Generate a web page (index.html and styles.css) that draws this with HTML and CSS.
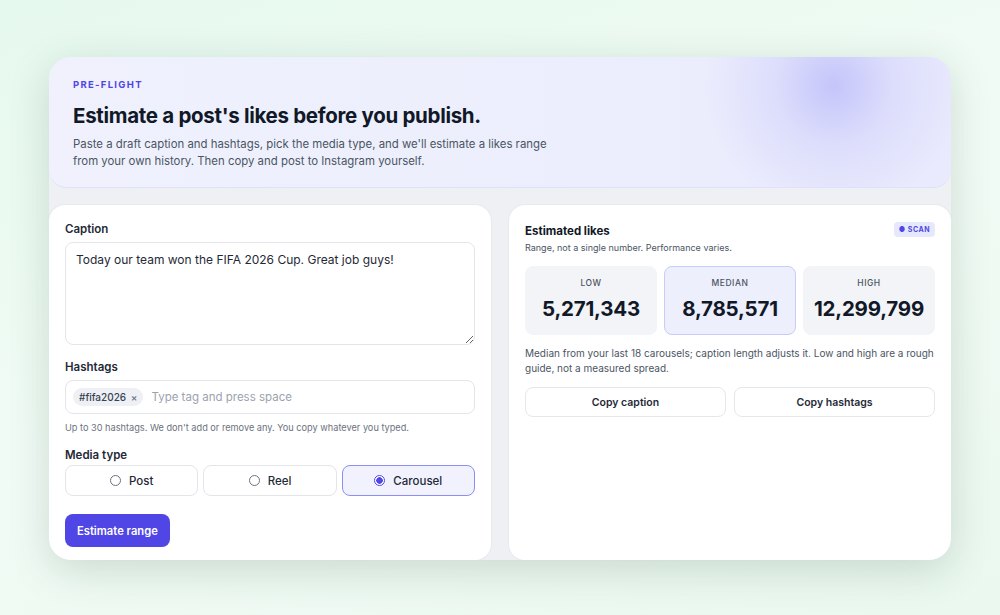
FILE: index.html
```html
<!DOCTYPE html>
<html lang="en">
<head>
    <meta charset="UTF-8">
    <meta name="viewport" content="width=device-width, initial-scale=1.0">
    <title>Pre-flight</title>
    <link rel="stylesheet" href="styles.css">
</head>
<body>

<div class="window">

    <!-- Intro header -->
    <header class="hero">
        <div class="eyebrow">PRE-FLIGHT</div>
        <h1>Estimate a post's likes before you publish.</h1>
        <p>Paste a draft caption and hashtags, pick the media type, and we'll estimate a likes range from your own history. Then copy and post to Instagram yourself.</p>
    </header>

    <div class="panels">

        <!-- Draft form -->
        <div class="panel draft" id="draft">
            <label class="field-label" for="caption">Caption</label>
            <textarea id="caption" class="caption">Today our team won the FIFA 2026 Cup. Great job guys!</textarea>

            <label class="field-label mt" for="tagInput">Hashtags</label>
            <div class="tag-box">
                <span class="chip">#fifa2026 <span class="chip-x">×</span></span>
                <input type="text" id="tagInput" placeholder="Type tag and press space">
            </div>
            <div class="help">Up to 30 hashtags. We don't add or remove any. You copy whatever you typed.</div>

            <div class="field-label mt2">Media type</div>
            <div class="media">
                <button type="button" class="media-opt"><span class="radio"></span>Post</button>
                <button type="button" class="media-opt"><span class="radio"></span>Reel</button>
                <button type="button" class="media-opt active"><span class="radio"></span>Carousel</button>
            </div>

            <button type="button" class="primary">Estimate range</button>
        </div>

        <!-- Result -->
        <div class="panel" id="result">
            <div class="result-head">
                <div>
                    <h2>Estimated likes</h2>
                    <div class="sub">Range, not a single number. Performance varies.</div>
                </div>
                <span class="badge">● SCAN</span>
            </div>

            <div class="stats">
                <div class="stat">
                    <div class="stat-label">LOW</div>
                    <div class="stat-value">5,271,343</div>
                </div>
                <div class="stat median">
                    <div class="stat-label">MEDIAN</div>
                    <div class="stat-value">8,785,571</div>
                </div>
                <div class="stat">
                    <div class="stat-label">HIGH</div>
                    <div class="stat-value">12,299,799</div>
                </div>
            </div>

            <p class="note">Median from your last 18 carousels; caption length adjusts it. Low and high are a rough guide, not a measured spread.</p>

            <div class="copy-row">
                <button type="button" class="ghost">Copy caption</button>
                <button type="button" class="ghost">Copy hashtags</button>
            </div>
        </div>

    </div>
</div>

</body>
</html>
```

FILE: styles.css
```css
body {
    font-family: 'Inter', 'Liberation Sans', sans-serif;
    margin: 0;
    padding: 57px 49px 0;
    height: 615px;
    box-sizing: border-box;
    overflow: hidden;
    background: linear-gradient(160deg, #e6f9ee 0%, #f1fbf5 50%, #eaf8ef 100%);
    color: #111827;
}

.window {
    height: 503px;
    border-radius: 22px;
    overflow: hidden;
    background-color: #eef0f4;
    box-shadow: 0 10px 40px rgba(40, 70, 55, 0.18);
    display: flex;
    flex-direction: column;
}

.hero {
    flex-shrink: 0;
    height: 131px;
    box-sizing: border-box;
    padding: 22px 24px 0;
    border-bottom: 1px solid #dfe1fb;
    border-radius: 0 0 18px 18px;
    background:
        radial-gradient(circle at 87% 22%, rgba(190, 190, 250, 0.85) 0, rgba(205, 205, 250, 0.45) 60px, rgba(230, 230, 252, 0) 130px),
        linear-gradient(90deg, #f0f1fd 0%, #eceefd 60%, #e9eafd 100%);
}

.eyebrow {
    font-size: 9.5px;
    font-weight: 700;
    letter-spacing: 1.3px;
    color: #4f46e5;
}

.hero h1 {
    margin: 13px 0 0;
    font-size: 20.5px;
    font-weight: 700;
    letter-spacing: -0.3px;
    color: #111827;
}

.hero p {
    margin: 8px 0 0;
    width: 490px;
    font-size: 11.4px;
    line-height: 17px;
    color: #4b5563;
}

.panels {
    flex: 1;
    min-height: 0;
    margin-top: 17px;
    display: grid;
    grid-template-columns: 1fr 1fr;
    gap: 18px;
}

.panel {
    background-color: #fff;
    border-radius: 16px;
    padding: 18px 16px 0;
    box-shadow: 0 0 0 1px #e7e9ef;
}

.panel.draft {
    padding-top: 17px;
}

.field-label {
    display: block;
    font-size: 11.5px;
    font-weight: 600;
    color: #1f2937;
    margin-bottom: 6px;
}

.mt {
    margin-top: 15px;
}

.mt2 {
    margin-top: 15px;
    margin-bottom: 3px;
}

.caption {
    display: block;
    width: 100%;
    height: 103px;
    box-sizing: border-box;
    border: 1px solid #e3e5ea;
    border-radius: 8px;
    padding: 9px 10px;
    font-family: 'Inter', 'Liberation Sans', sans-serif;
    font-size: 12px;
    color: #1f2937;
    resize: vertical;
}

.tag-box {
    display: flex;
    align-items: center;
    gap: 6px;
    height: 34px;
    box-sizing: border-box;
    border: 1px solid #e3e5ea;
    border-radius: 8px;
    padding: 0 7px;
}

.chip {
    background-color: #eef0f6;
    border-radius: 10px;
    padding: 3px 6px 3px 6px;
    font-size: 10px;
    font-weight: 500;
    color: #374151;
    white-space: nowrap;
}

.chip-x {
    margin-left: 2px;
    color: #6b7280;
}

.tag-box input {
    flex: 1;
    border: none;
    outline: none;
    font-family: 'Inter', 'Liberation Sans', sans-serif;
    font-size: 11.5px;
    color: #111827;
}

.tag-box input::placeholder {
    color: #9ca3af;
}

.help {
    margin-top: 8px;
    font-size: 9.2px;
    color: #6b7280;
}

.media {
    display: grid;
    grid-template-columns: 1fr 1fr 1fr;
    gap: 5px;
}

.media-opt {
    height: 31px;
    display: flex;
    align-items: center;
    justify-content: center;
    gap: 8px;
    background-color: #fff;
    border: 1px solid #e3e5ea;
    border-radius: 8px;
    font-family: 'Inter', 'Liberation Sans', sans-serif;
    font-size: 11.5px;
    font-weight: 500;
    color: #1f2937;
    cursor: pointer;
}

.radio {
    width: 9px;
    height: 9px;
    border: 1px solid #6b7280;
    border-radius: 50%;
    box-sizing: content-box;
}

.media-opt.active {
    background-color: #f1f2fe;
    border-color: #8b8ff3;
}

.media-opt.active .radio {
    border-color: #4f46e5;
    background: radial-gradient(circle, #4f46e5 0, #4f46e5 3px, #fff 3.5px);
}

.primary {
    margin-top: 18px;
    height: 33px;
    padding: 0 12px;
    background-color: #4f46e5;
    color: #fff;
    border: none;
    border-radius: 8px;
    font-family: 'Inter', 'Liberation Sans', sans-serif;
    font-size: 11.2px;
    font-weight: 600;
    cursor: pointer;
}

.result-head {
    display: flex;
    justify-content: space-between;
    align-items: flex-start;
}

.result-head h2 {
    margin: 1px 0 0;
    font-size: 11.5px;
    font-weight: 700;
    color: #111827;
}

.sub {
    margin-top: 4px;
    font-size: 9px;
    color: #4b5563;
}

.badge {
    margin-top: -1px;
    background-color: #e6e8fd;
    color: #4f46e5;
    font-size: 7px;
    font-weight: 700;
    letter-spacing: 0.5px;
    padding: 3px 5px;
    border-radius: 4px;
}

.stats {
    margin-top: 13px;
    display: grid;
    grid-template-columns: 1fr 1fr 1fr;
    gap: 7px;
}

.stat {
    height: 69px;
    box-sizing: border-box;
    background-color: #f3f4f7;
    border: 1px solid #f3f4f7;
    border-radius: 8px;
    text-align: center;
    padding-top: 11px;
}

.stat.median {
    background-color: #eeeffd;
    border-color: #c9cbf8;
}

.stat-label {
    font-size: 8.5px;
    font-weight: 500;
    letter-spacing: 0.5px;
    color: #4b5563;
}

.stat-value {
    margin-top: 8px;
    font-size: 20.5px;
    font-weight: 700;
    letter-spacing: -0.2px;
    color: #111827;
}

.note {
    margin: 11px 0 0;
    font-size: 10px;
    line-height: 15px;
    color: #4b5563;
}

.copy-row {
    margin-top: 11px;
    display: grid;
    grid-template-columns: 1fr 1fr;
    gap: 8px;
}

.ghost {
    height: 30px;
    background-color: #fff;
    border: 1px solid #e5e7eb;
    border-radius: 8px;
    font-family: 'Inter', 'Liberation Sans', sans-serif;
    font-size: 10.5px;
    font-weight: 600;
    color: #1f2937;
    cursor: pointer;
}
```
